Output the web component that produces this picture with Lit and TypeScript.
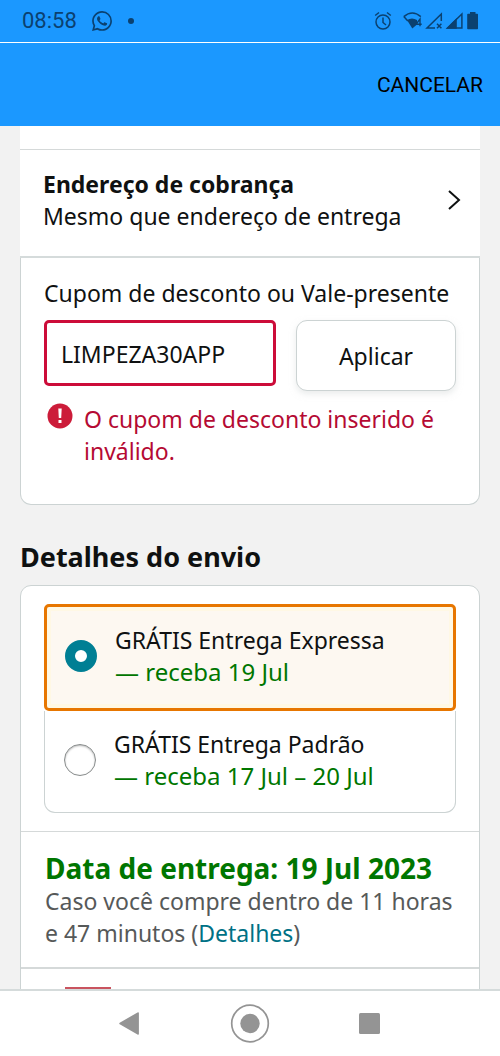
import { LitElement, html, css } from "lit";
import { customElement, state } from "lit/decorators.js";

interface ShippingOption {
  id: string;
  name: string;
  date: string;
}

const OPTIONS: ShippingOption[] = [
  { id: "expressa", name: "GRÁTIS Entrega Expressa", date: "— receba 19 Jul" },
  { id: "padrao", name: "GRÁTIS Entrega Padrão", date: "— receba 17 Jul – 20 Jul" },
];

@customElement("status-bar")
class StatusBar extends LitElement {
  static styles = css`
    :host {
      display: flex;
      align-items: center;
      height: 42px;
      padding: 0 21px 0 22px;
      box-sizing: border-box;
      color: #0b4170;
      font: 22px/26px Roboto, sans-serif;
    }
    .chat { margin-left: 15px; }
    .dot {
      width: 6px;
      height: 6px;
      margin-left: 16px;
      border-radius: 50%;
      background: currentColor;
    }
    .system { margin-left: auto; }
    svg { display: block; }
  `;

  render() {
    return html`
      <span>08:58</span>
      <svg class="chat" width="20" height="20" viewBox="0 0 24 24" fill="currentColor">
        <path d="M17.5 14.4c-.3-.15-1.75-.87-2.03-.97-.27-.1-.47-.15-.66.15-.2.3-.77.97-.94 1.16-.17.2-.35.22-.65.08-.3-.15-1.25-.46-2.38-1.48-.88-.78-1.48-1.75-1.65-2.05-.17-.3-.02-.46.13-.6.13-.14.3-.35.45-.53.14-.18.2-.3.3-.5.1-.2.04-.37-.03-.52-.08-.15-.67-1.61-.92-2.2-.24-.58-.49-.5-.67-.51h-.57c-.2 0-.52.07-.8.37-.27.3-1.03 1.02-1.03 2.48s1.06 2.87 1.21 3.07c.15.2 2.1 3.2 5.08 4.49.7.3 1.26.49 1.7.63.7.22 1.36.19 1.87.11.57-.08 1.75-.71 2-1.4.25-.7.25-1.29.18-1.41-.08-.13-.28-.2-.57-.35M12.05 21.8h0a9.87 9.87 0 0 1-5.03-1.38l-.36-.21-3.74.98 1-3.65-.24-.37a9.86 9.86 0 0 1-1.5-5.26c0-5.45 4.43-9.88 9.88-9.88a9.82 9.82 0 0 1 9.88 9.89c0 5.45-4.43 9.88-9.89 9.88M20.46 3.49A11.8 11.8 0 0 0 12.05 0C5.5 0 .16 5.34.16 11.9c0 2.1.54 4.14 1.58 5.94L.06 24l6.3-1.65a11.9 11.9 0 0 0 5.69 1.45c6.55 0 11.89-5.34 11.89-11.9a11.8 11.8 0 0 0-3.48-8.41"></path>
      </svg>
      <span class="dot"></span>
      <svg class="system" width="105" height="20" viewBox="0 0 105 20" fill="none" stroke="currentColor">
        <circle cx="9" cy="11" r="7" stroke-width="1.5"></circle>
        <path d="M9 6.500v5l3 2.500M1.200 4.500 5 1.500M13 1.500l3.800 3" stroke-width="1.500"></path>
        <path d="M29.800 5.600Q38.300-1.600 46.800 5.600M29.800 5.600l4 4.500" stroke-width="1.500"></path>
        <path d="M33 9q5-3 10 0v4.500l-4.700 4z" fill="currentColor" stroke="none"></path>
        <path d="M46 15.200V8l-4 5.200h5.700" stroke-width="1.400"></path>
        <path d="M61 17H53L67.300 3v7M63 12.800l4.400 4.400M67.400 12.800l-4.400 4.400" stroke-width="1.500"></path>
        <path d="M72 17.700 82.800 7v10.700z" fill="currentColor" stroke="none"></path>
        <path d="M73.500 17 87.900 3v14z" stroke-width="1.500"></path>
        <path d="M96 1h5.500v1.700h1.800q.7 0 .7.700v14.200q0 .7-.7.700h-9.400q-.7 0-.7-.7V3.400q0-.7.700-.7H96z" fill="currentColor" stroke="none"></path>
      </svg>
    `;
  }
}

@customElement("nav-bar")
class NavBar extends LitElement {
  static styles = css`
    :host {
      display: grid;
      grid-template-columns: repeat(3, 120px);
      justify-content: center;
      height: 67px;
      box-sizing: border-box;
      flex: none;
      background: #fff;
      border-top: 2px solid #d5dbdb;
    }
    button {
      display: grid;
      place-items: center;
      padding: 0;
      border: 0;
      background: none;
      cursor: pointer;
    }
  `;

  render() {
    return html`
      <button aria-label="Voltar">
        <svg width="40" height="40" viewBox="0 0 40 40" fill="#949494">
          <path d="M9.700 18.700 27.500 8.500q1.400-.6 1.400.8v20.400q0 1.400-1.400.8L9.700 20.300q-1-.8 0-1.600z"></path>
        </svg>
      </button>
      <button aria-label="Início">
        <svg width="40" height="40" viewBox="0 0 40 40">
          <circle cx="20" cy="19.500" r="18.300" fill="none" stroke="#949494" stroke-width="1.700"></circle>
          <circle cx="20" cy="19.500" r="9.700" fill="#949494"></circle>
        </svg>
      </button>
      <button aria-label="Recentes">
        <svg width="40" height="40" viewBox="0 0 40 40">
          <rect x="9" y="9" width="21" height="21" rx="1.500" fill="#949494"></rect>
        </svg>
      </button>
    `;
  }
}

@customElement("app-root")
class AppRoot extends LitElement {
  @state() private selected = "expressa";
  @state() private coupon = "LIMPEZA30APP";

  static styles = css`
    :host {
      display: flex;
      flex-direction: column;
      height: 100vh;
      background: #f2f2f2;
      color: #0f1111;
      font: 23px/32px "Noto Sans", sans-serif;
    }
    * { box-sizing: border-box; }
    h2, h3, p, fieldset { margin: 0; }
    button, input { font: inherit; color: inherit; }
    a { color: #007185; text-decoration: none; }
    .top { flex: none; background: #1b98ff; }
    .appbar {
      display: flex;
      align-items: center;
      justify-content: flex-end;
      height: 84px;
      padding: 0 17px;
      border-top: 1px solid #fff;
    }
    .cancel {
      padding: 0;
      border: 0;
      background: none;
      color: #000;
      font: 21px/28px Roboto, sans-serif;
    }
    main {
      flex: 1;
      min-height: 0;
      overflow-y: auto;
      scrollbar-width: none;
      padding: 0 20px;
    }
    .payment { padding-top: 23px; background: #fff; border-radius: 0 0 11px 11px; }
    .address {
      display: flex;
      align-items: center;
      justify-content: space-between;
      width: 100%;
      padding: 18px 18px 24px 23px;
      border: 0;
      border-top: 1px solid #d5d9d9;
      border-bottom: 2px solid #d5dbdb;
      background: #fff;
      text-align: left;
    }
    .address strong { display: block; }
    .coupon {
      padding: 19px 23px 37px;
      border: 1px solid #ccd3d3;
      border-top: 0;
      border-radius: 0 0 11px 11px;
    }
    .coupon label { display: block; }
    .row { display: flex; align-items: flex-start; gap: 20px; margin-top: 11px; }
    .code {
      flex: 1;
      min-width: 0;
      height: 66px;
      padding: 2px 14px 0;
      border: 3px solid #cc0c39;
      border-radius: 5px;
      background: #fff;
      outline: 0;
    }
    .apply {
      flex: none;
      width: 160px;
      height: 71px;
      border: 1px solid #ccd3d3;
      border-radius: 11px;
      background: #fff;
      box-shadow: 0 3px 6px rgba(213, 217, 217, 0.5);
    }
    .error { display: flex; gap: 11px; margin-top: 12px; padding-left: 3px; color: #b50a33; }
    .error svg { flex: none; }
    h2 { margin: 35px 0 11px; font-size: 27px; line-height: 34px; }
    .card {
      background: #fff;
      border: 1px solid #ccd3d3;
      border-radius: 11px;
      padding-bottom: 24px;
    }
    .options { min-width: 0; padding: 18px 23px; border: 0; }
    .option {
      display: flex;
      align-items: center;
      gap: 18px;
      min-height: 102px;
      padding: 0 18px 3px 19px;
      border: 1px solid #ccd3d3;
      border-top: 0;
      border-radius: 0 0 11px 11px;
    }
    .option.on {
      min-height: 107px;
      padding-left: 18px;
      border: 3px solid #e77600;
      border-radius: 5px;
      background: #fdf8f1;
      box-shadow: inset 0 0 0 4px #fff8e4;
    }
    .option input {
      appearance: none;
      flex: none;
      width: 32px;
      height: 32px;
      margin: 0;
      border: 1px solid #888c8c;
      border-radius: 50%;
      background: #fff;
      box-shadow: inset 0 1px 2px rgba(15, 17, 17, 0.3);
    }
    .option input:checked { border: 10px solid #007f94; box-shadow: none; }
    .date { display: block; font-size: 24px; color: #007600; }
    .delivery {
      padding: 19px 24px 18px;
      border: 1px solid #d5d9d9;
      border-width: 1px 0 2px;
      color: #565959;
    }
    h3 { font-size: 28px; line-height: 34px; color: #007600; }
    .photo { width: 46px; height: 80px; margin: 18px 0 0 44px; background: #c9545f; }
  `;

  render() {
    return html`
      <div class="top">
        <status-bar></status-bar>
        <div class="appbar"><button class="cancel">CANCELAR</button></div>
      </div>
      <main>
        <section class="payment">
          <button class="address">
            <span><strong>Endereço de cobrança</strong>Mesmo que endereço de entrega</span>
            <svg width="16" height="22" viewBox="0 0 16 22" fill="none" stroke="#0f1111" stroke-width="2">
              <path d="M3 2l10 9-10 9"></path>
            </svg>
          </button>
          <div class="coupon">
            <label for="code">Cupom de desconto ou Vale-presente</label>
            <div class="row">
              <input
                class="code"
                id="code"
                type="text"
                aria-invalid="true"
                aria-describedby="code-error"
                .value=${this.coupon}
                @input=${(e: Event) => (this.coupon = (e.target as HTMLInputElement).value)}
              />
              <button class="apply">Aplicar</button>
            </div>
            <div class="error">
              <svg width="26" height="26" viewBox="0 0 26 26">
                <circle cx="13" cy="13" r="12.500" fill="#cc1c39"></circle>
                <path d="M11.300 5.500h3.400l-.5 9.500h-2.400zM11.500 17h3v3h-3z" fill="#fff"></path>
              </svg>
              <p id="code-error">O cupom de desconto inserido é inválido.</p>
            </div>
          </div>
        </section>

        <h2>Detalhes do envio</h2>
        <section class="card">
          <fieldset class="options" aria-label="Opções de envio">
            ${OPTIONS.map(
              (o) => html`
                <label class="option ${o.id === this.selected ? "on" : ""}">
                  <input
                    type="radio"
                    name="envio"
                    .checked=${o.id === this.selected}
                    @change=${() => (this.selected = o.id)}
                  />
                  <span>${o.name}<span class="date">${o.date}</span></span>
                </label>
              `
            )}
          </fieldset>
          <div class="delivery">
            <h3>Data de entrega: 19 Jul 2023</h3>
            <p>Caso você compre dentro de 11 horas e 47 minutos (<a href="#">Detalhes</a>)</p>
          </div>
          <div class="photo"></div>
        </section>
      </main>
      <nav-bar></nav-bar>
    `;
  }
}
